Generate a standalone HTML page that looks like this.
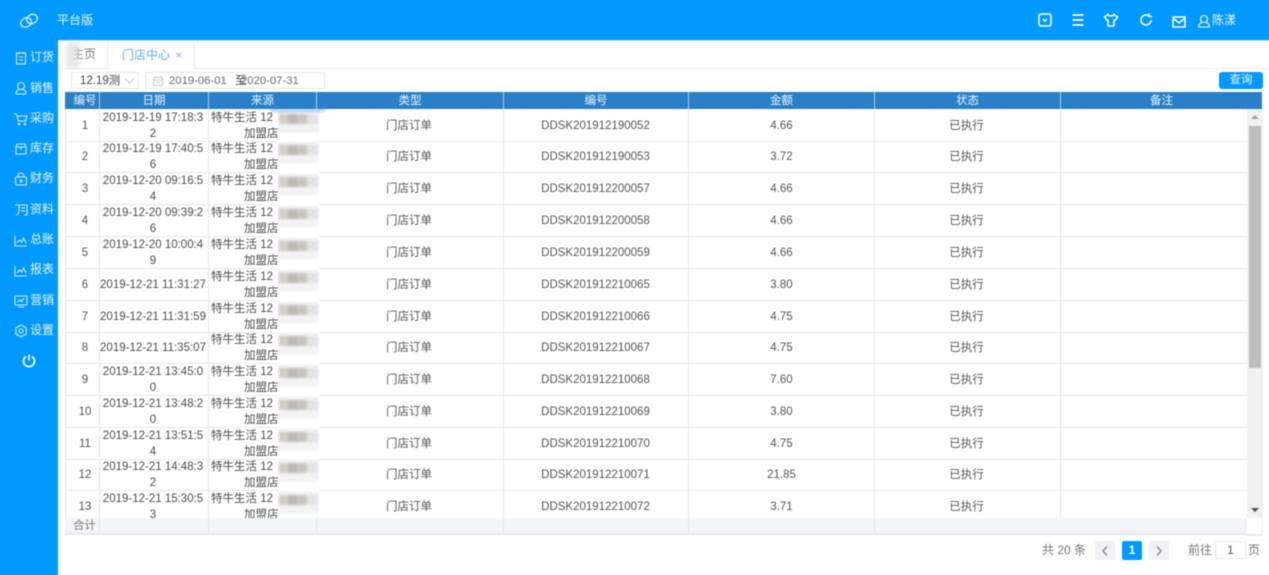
<!DOCTYPE html>
<html lang="zh"><head><meta charset="utf-8"><style>
*{box-sizing:border-box}
html,body{margin:0;width:1269px;height:575px;overflow:hidden;background:#fff}
body{position:relative;font:12px/15.6px "Liberation Sans","Noto Sans CJK SC",sans-serif;color:#555}
#w{position:absolute;inset:0;filter:blur(.4px)}
.a{position:absolute}
#top{left:-3px;top:-3px;width:1275px;height:43px;background:#0099ff}
#side{left:-3px;top:40px;width:61px;height:540px;background:#0099ff}
.m{position:absolute;left:30px;color:#e8f5ff;font-size:12px;line-height:16px;white-space:nowrap}
.i{position:absolute;left:14px;width:14px;height:14px;fill:none;stroke:#d5eeff;stroke-width:1.1}
.ti{position:absolute;top:12px;width:16px;height:16px;fill:none;stroke:#fff;stroke-width:1.5}
.h{position:absolute;top:92px;height:17px;background:#2a80c8;color:#e8f4fc;font-size:11.5px;text-align:center;line-height:18px;border-right:1px solid #a9cce8;overflow:hidden}
.r{position:absolute;left:66px;width:1181px;height:33px;border-bottom:1px solid #e4e6ea;overflow:hidden;font-size:11.5px}
.r div{position:absolute;top:0;height:33px;text-align:center;white-space:nowrap}
.n{left:0;width:34px;line-height:34px;color:#555;border-right:1px solid #e4e6ea;padding-left:5px}
.d{left:34px;width:109px;padding:2px 2px 0 0;color:#4c4c4c;border-right:1px solid #e4e6ea}
.r .d.o{line-height:34px;padding-top:0}
.s{left:143px;width:108px;color:#4c4c4c;border-right:1px solid #e4e6ea;text-align:left!important;padding:2px 0 0 2px}
.s span{display:block;padding-left:33px}
.t{left:251px;width:187px;line-height:34px;border-right:1px solid #e4e6ea;padding-right:2px}
.b{left:438px;width:185px;line-height:34px;border-right:1px solid #e4e6ea;padding-right:1px}
.j{left:623px;width:186px;line-height:34px;border-right:1px solid #e4e6ea}
.z{left:809px;width:186px;line-height:34px;border-right:1px solid #e4e6ea;padding-right:2px}
.e{left:995px;width:186px}
.r i{position:absolute;display:block;left:212px;top:0;width:41px;height:33px;background:linear-gradient(#fff 0 1px,#f3f3f4 2px 22px,#fff 25px)}
.r u{position:absolute;display:block;left:213px;top:5px;height:10px;width:39px;background:linear-gradient(90deg,#d2cec9 0 9px,#bdbab6 9px 18px,#c9c6c0 18px 28px,#e2e2e7 28px);text-decoration:none;filter:blur(1px)}
.f{position:absolute;top:518px;height:17px;background:#f3f5f8;border-right:1px solid #e4e6ea;border-bottom:2px solid #e6e8ea}
.p{position:absolute;top:541px;height:19px;line-height:19px;text-align:center}
</style></head><body><div id="w">
<div class="a" id="top"></div>
<svg class="a" style="left:18px;top:11px;width:22px;height:20px" viewBox="0 0 22 20" fill="none" stroke="#d8f0ff" stroke-width="1.3"><ellipse cx="8" cy="11.500" rx="5.500" ry="4.500" transform="rotate(-25 8 11.500)"/><ellipse cx="14" cy="8" rx="5.500" ry="4.500" transform="rotate(-25 14 8)"/></svg>
<div class="a" style="left:57px;top:12px;color:#eaf6ff;line-height:16px">平台版</div>
<svg class="ti" style="left:1037px" viewBox="0 0 16 16"><rect x="2" y="2" width="12" height="12" rx="2"/><path d="M6 7l2 2 2-2"/></svg>
<svg class="ti" style="left:1070px;stroke-width:1.800" viewBox="0 0 16 16"><path d="M2.500 3h11M2.500 8h11M2.500 13h11"/></svg>
<svg class="ti" style="left:1103px" viewBox="0 0 16 16"><path d="M5 2.500L1.500 5l2 3H5v6h6V8h1.500l2-3L11 2.500c-1 2-5 2-6 0z"/></svg>
<svg class="ti" style="left:1138px" viewBox="0 0 16 16"><path d="M13 8a5 5 0 1 1-2-4M11 1.500V4.500H14"/></svg>
<svg class="ti" style="left:1171px;top:14px" viewBox="0 0 16 16"><rect x="2" y="3" width="12" height="10"/><path d="M2 4l6 5 6-5"/></svg>
<svg class="ti" style="left:1196px;top:13px;stroke-width:1.100" viewBox="0 0 16 16"><circle cx="8" cy="6" r="3.500"/><path d="M2.500 14c.5-3 2-4.500 3.500-4.500M13.500 14c-.5-3-2-4.500-3.500-4.500M2.500 14h11"/></svg>
<div class="a" style="left:1212px;top:12px;color:#eaf6ff;line-height:16px">陈漾</div>
<div class="a" id="side"></div>
<svg class="i" style="top:51px" viewBox="0 0 14 14"><rect x="2.500" y="2" width="9" height="11"/><path d="M5 1v2M9 1v2M5 6h4M5 9h4"/></svg><div class="m" style="top:49px">订货</div>
<svg class="i" style="top:81px" viewBox="0 0 14 14"><circle cx="7" cy="5" r="3.500"/><path d="M2 13c0-3 1.500-4 3-4.500M12 13c0-3-1.500-4-3-4.500M2 13h10"/></svg><div class="m" style="top:80px">销售</div>
<svg class="i" style="top:112px" viewBox="0 0 14 14"><path d="M0 2h2.500l2 7h7l1.500-5H3.500"/><circle cx="5" cy="12" r=".8"/><circle cx="11" cy="12" r=".8"/></svg><div class="m" style="top:110px">采购</div>
<svg class="i" style="top:142px" viewBox="0 0 14 14"><path d="M3 2h8l1 3v7H2V5zM2 5h10M7 5v3"/></svg><div class="m" style="top:140px">库存</div>
<svg class="i" style="top:172px" viewBox="0 0 14 14"><path d="M4 5V4a3 3 0 0 1 6 0v1"/><rect x="1.500" y="5" width="11" height="8" rx="1.500"/><circle cx="7" cy="9" r="1"/></svg><div class="m" style="top:170px">财务</div>
<svg class="i" style="top:203px" viewBox="0 0 14 14"><path d="M1 2h4v6a4 4 0 0 1-3 4M5 2h8v10h-3M7 5h4M7 8h4"/></svg><div class="m" style="top:201px">资料</div>
<svg class="i" style="top:234px" viewBox="0 0 14 14"><path d="M1 2v10h12M3 9l2.500-3 2 2 2-4L12 9"/></svg><div class="m" style="top:231px">总账</div>
<svg class="i" style="top:264px" viewBox="0 0 14 14"><path d="M1 2v10h12M3 9l2.500-3 2 2 2-4L12 9"/></svg><div class="m" style="top:261px">报表</div>
<svg class="i" style="top:294px" viewBox="0 0 14 14"><rect x="1" y="2" width="12" height="9" rx="1"/><path d="M4 13h6M3.500 8l2.500-2 1.500 1.500L10 4.500"/></svg><div class="m" style="top:292px">营销</div>
<svg class="i" style="top:324px" viewBox="0 0 14 14"><path d="M7 1l5.200 3v6L7 13 1.800 10V4z"/><circle cx="7" cy="7" r="2"/></svg><div class="m" style="top:322px">设置</div>
<svg class="a" style="left:21px;top:353px;width:16px;height:16px" viewBox="0 0 16 16" fill="none" stroke="#fff" stroke-width="1.700"><path d="M5 3.500a5.500 5.500 0 1 0 6 0M8 1.500v6"/></svg>

<div class="a" style="left:58px;top:40px;width:1211px;height:1px;background:#cfe6f8"></div>
<div class="a" style="left:58px;top:68px;width:1211px;height:1px;background:#ececef"></div>
<div class="a" style="left:58px;top:41px;width:50px;height:27px;border-right:1px solid #e8e8ec;color:#777;line-height:27px;padding-left:14px">主页</div>
<div class="a" style="left:66px;top:42px;width:14px;height:26px;background:#dfe0e3;opacity:.7;filter:blur(2px)"></div>
<div class="a" style="left:108px;top:42px;width:87px;height:27px;background:#fff;border-right:1px solid #e8e8ec;color:#6aa9e6;line-height:26px;padding-left:14px">门店中心 <span style="color:#8aa9d0;margin-left:2px">×</span></div>

<div class="a" style="left:71px;top:72px;width:68px;height:17px;border:1px solid #e6e8ec;font-size:11.5px;line-height:17px;padding-left:8px;color:#444;white-space:nowrap">12.19测<svg style="position:absolute;left:52px;top:4px;width:11px;height:8px" viewBox="0 0 11 8" fill="none" stroke="#c0c4cc"><path d="M1 1.500l4.500 4.500L10 1.500"/></svg></div>
<div class="a" style="left:145px;top:72px;width:180px;height:17px;border:1px solid #e6e8ec;font-size:11.3px;line-height:17px;color:#6a6a6a;white-space:nowrap"><span class="a" style="left:23px">2019-06-01</span><span class="a" style="left:89px;color:#444">至</span><span class="a" style="left:95px">2020-07-31</span><svg style="position:absolute;left:6px;top:2px;width:12px;height:12px" viewBox="0 0 12 12" fill="none" stroke="#c8ccd2"><path d="M1.500 2.500h9v8h-9zM1.500 5h9M3.500 1v2M8.500 1v2M3.500 7.500h5"/></svg></div>
<div class="a" style="left:1219px;top:72px;width:44px;height:17px;background:#0099ff;border-radius:3px;color:#e8f5ff;font-size:11.5px;text-align:center;line-height:17px">查询</div>

<div class="h" style="left:65px;width:35px;padding-left:6px">编号</div><div class="h" style="left:100px;width:109px">日期</div><div class="h" style="left:209px;width:108px">来源</div><div class="h" style="left:317px;width:187px">类型</div><div class="h" style="left:504px;width:185px">编号</div><div class="h" style="left:689px;width:186px">金额</div><div class="h" style="left:875px;width:186px">状态</div><div class="h" style="left:1061px;width:201px;border:0">备注</div>
<div class="a" style="left:65px;top:109px;width:1px;height:427px;background:#e4e6ea"></div>
<div class="a" style="left:1262px;top:109px;width:1px;height:427px;background:#eceef0"></div>

<div class="a" style="left:0;top:0;width:1269px;height:518px;overflow:hidden;pointer-events:none">
<div class="r" style="top:109px"><div class="n">1</div><div class="d">2019-12-19 17:18:3<br>2</div><div class="s">特牛生活 12<span>加盟店</span></div><i></i><u></u><div class="t">门店订单</div><div class="b">DDSK201912190052</div><div class="j">4.66</div><div class="z">已执行</div><div class="e"></div></div>
<div class="r" style="top:140px"><div class="n">2</div><div class="d">2019-12-19 17:40:5<br>6</div><div class="s">特牛生活 12<span>加盟店</span></div><i></i><u></u><div class="t">门店订单</div><div class="b">DDSK201912190053</div><div class="j">3.72</div><div class="z">已执行</div><div class="e"></div></div>
<div class="r" style="top:172px"><div class="n">3</div><div class="d">2019-12-20 09:16:5<br>4</div><div class="s">特牛生活 12<span>加盟店</span></div><i></i><u></u><div class="t">门店订单</div><div class="b">DDSK201912200057</div><div class="j">4.66</div><div class="z">已执行</div><div class="e"></div></div>
<div class="r" style="top:204px"><div class="n">4</div><div class="d">2019-12-20 09:39:2<br>6</div><div class="s">特牛生活 12<span>加盟店</span></div><i></i><u></u><div class="t">门店订单</div><div class="b">DDSK201912200058</div><div class="j">4.66</div><div class="z">已执行</div><div class="e"></div></div>
<div class="r" style="top:236px"><div class="n">5</div><div class="d">2019-12-20 10:00:4<br>9</div><div class="s">特牛生活 12<span>加盟店</span></div><i></i><u></u><div class="t">门店订单</div><div class="b">DDSK201912200059</div><div class="j">4.66</div><div class="z">已执行</div><div class="e"></div></div>
<div class="r" style="top:268px"><div class="n">6</div><div class="d o">2019-12-21 11:31:27</div><div class="s">特牛生活 12<span>加盟店</span></div><i></i><u></u><div class="t">门店订单</div><div class="b">DDSK201912210065</div><div class="j">3.80</div><div class="z">已执行</div><div class="e"></div></div>
<div class="r" style="top:300px"><div class="n">7</div><div class="d o">2019-12-21 11:31:59</div><div class="s">特牛生活 12<span>加盟店</span></div><i></i><u></u><div class="t">门店订单</div><div class="b">DDSK201912210066</div><div class="j">4.75</div><div class="z">已执行</div><div class="e"></div></div>
<div class="r" style="top:331px"><div class="n">8</div><div class="d o">2019-12-21 11:35:07</div><div class="s">特牛生活 12<span>加盟店</span></div><i></i><u></u><div class="t">门店订单</div><div class="b">DDSK201912210067</div><div class="j">4.75</div><div class="z">已执行</div><div class="e"></div></div>
<div class="r" style="top:363px"><div class="n">9</div><div class="d">2019-12-21 13:45:0<br>0</div><div class="s">特牛生活 12<span>加盟店</span></div><i></i><u></u><div class="t">门店订单</div><div class="b">DDSK201912210068</div><div class="j">7.60</div><div class="z">已执行</div><div class="e"></div></div>
<div class="r" style="top:395px"><div class="n">10</div><div class="d">2019-12-21 13:48:2<br>0</div><div class="s">特牛生活 12<span>加盟店</span></div><i></i><u></u><div class="t">门店订单</div><div class="b">DDSK201912210069</div><div class="j">3.80</div><div class="z">已执行</div><div class="e"></div></div>
<div class="r" style="top:427px"><div class="n">11</div><div class="d">2019-12-21 13:51:5<br>4</div><div class="s">特牛生活 12<span>加盟店</span></div><i></i><u></u><div class="t">门店订单</div><div class="b">DDSK201912210070</div><div class="j">4.75</div><div class="z">已执行</div><div class="e"></div></div>
<div class="r" style="top:458px"><div class="n">12</div><div class="d">2019-12-21 14:48:3<br>2</div><div class="s">特牛生活 12<span>加盟店</span></div><i></i><u></u><div class="t">门店订单</div><div class="b">DDSK201912210071</div><div class="j">21.85</div><div class="z">已执行</div><div class="e"></div></div>
<div class="r" style="top:490px"><div class="n">13</div><div class="d">2019-12-21 15:30:5<br>3</div><div class="s">特牛生活 12<span>加盟店</span></div><i></i><u></u><div class="t">门店订单</div><div class="b">DDSK201912210072</div><div class="j">3.71</div><div class="z">已执行</div><div class="e"></div></div>
</div>
<div class="a" style="left:270px;top:109px;width:55px;height:3px;background:#2a80c8;opacity:.35;filter:blur(1px)"></div>

<div class="f" style="left:65px;width:35px;color:#777;font-size:11.5px;text-align:center;line-height:17px;padding-left:5px">合计</div><div class="f" style="left:100px;width:109px"></div><div class="f" style="left:209px;width:108px"></div><div class="f" style="left:317px;width:187px"></div><div class="f" style="left:504px;width:185px"></div><div class="f" style="left:689px;width:186px"></div><div class="f" style="left:875px;width:371px"></div>
<div class="a" style="left:1246px;top:518px;width:17px;height:18px;border-bottom:2px solid #e6e8ea;border-right:1px solid #eceef0"></div>

<div class="a" style="left:1247px;top:109px;width:15px;height:409px;background:#f1f1f1"></div>
<div class="a" style="left:1249px;top:126px;width:12px;height:242px;background:#bdbdbd"></div>
<div class="a" style="left:1251px;top:115px;border:4px solid transparent;border-top:0;border-bottom:4px solid #a3a3a3"></div>
<div class="a" style="left:1251px;top:508px;border:4px solid transparent;border-bottom:0;border-top:4px solid #505050"></div>

<div class="p" style="left:1042px;color:#777;white-space:nowrap">共 20 条</div>
<div class="p" style="left:1095px;width:20px;background:#f1f2f5;border-radius:2px"><svg style="width:8px;height:12px;margin-top:4px" viewBox="0 0 8 12" fill="none" stroke="#777" stroke-width="1.200"><path d="M6 1.500L2 6l4 4.500"/></svg></div>
<div class="p" style="left:1122px;width:20px;background:#0099ff;border-radius:2px;color:#fff;font-weight:bold">1</div>
<div class="p" style="left:1149px;width:20px;background:#f1f2f5;border-radius:2px"><svg style="width:8px;height:12px;margin-top:4px" viewBox="0 0 8 12" fill="none" stroke="#777" stroke-width="1.200"><path d="M2 1.500L6 6l-4 4.500"/></svg></div>
<div class="p" style="left:1188px;color:#777;white-space:nowrap">前往</div>
<div class="p" style="left:1215px;top:541px;width:31px;height:18px;border:1px solid #e4e6ea;border-radius:2px;line-height:16px;color:#555">1</div>
<div class="p" style="left:1248px;color:#777">页</div>
</div></body></html>
